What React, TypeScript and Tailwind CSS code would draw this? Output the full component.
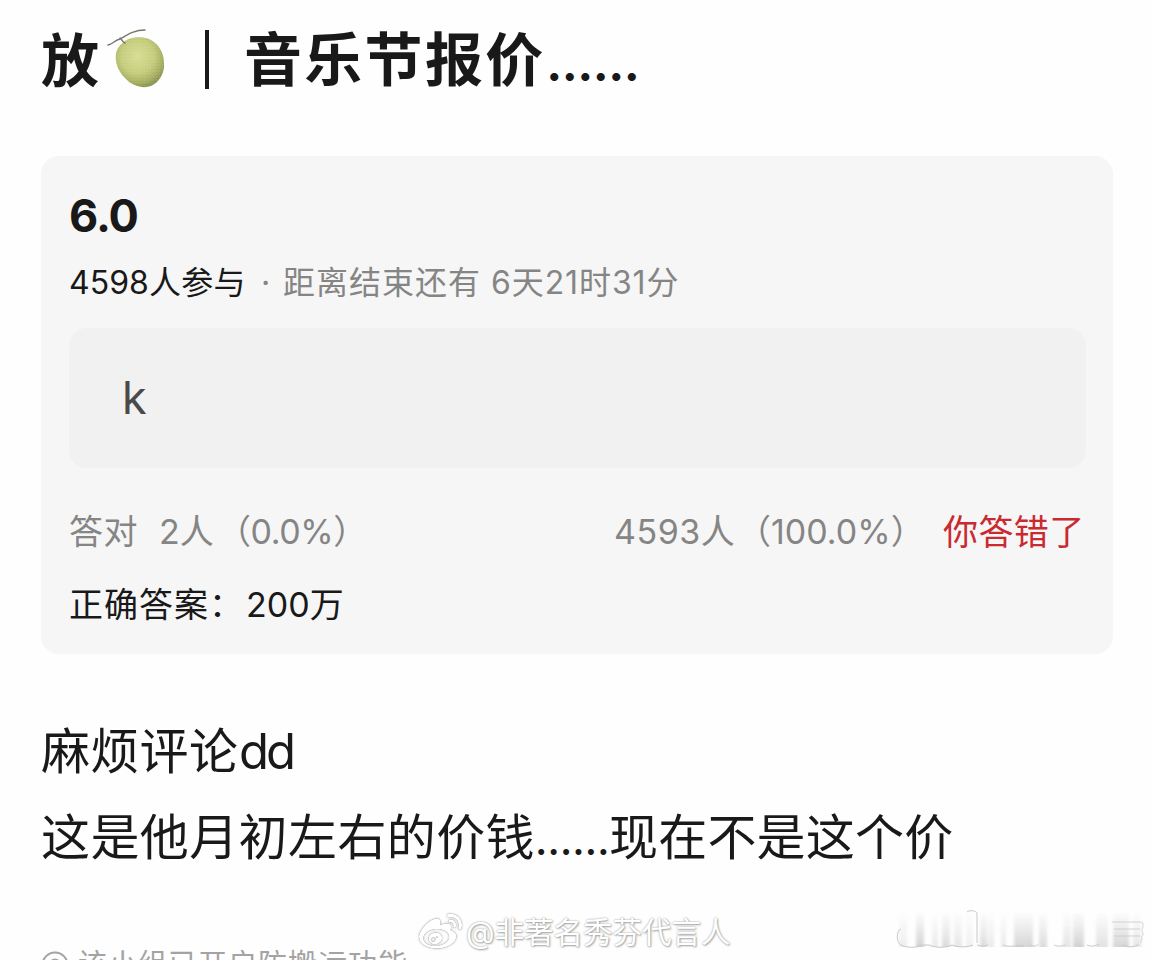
import { FaWeibo } from 'react-icons/fa';

function Melon() {
  return (
    <svg width="64" height="64" viewBox="0 0 64 64" className="shrink-0">
      <defs>
        <radialGradient id="melon" cx="0.45" cy="0.38" r="0.62">
          <stop offset="0" stopColor="#d6dc93" />
          <stop offset="0.55" stopColor="#c2ca78" />
          <stop offset="0.85" stopColor="#a0a95a" />
          <stop offset="1" stopColor="#858e4c" />
        </radialGradient>
        <pattern id="net" width="3" height="3" patternUnits="userSpaceOnUse">
          <path d="M0 1.5L1.5 0L3 1.5L1.5 3Z" fill="none" stroke="#eef0bd" strokeWidth="0.5" opacity="0.4" />
        </pattern>
      </defs>
      <path
        d="M17 13C22 8 34 7 42 10C51 14 57 23 57 34C58 45 51 54 44 57C36 60 25 57 18 49C10 41 8 32 9 25C10 19 13 16 17 13Z"
        fill="url(#melon)"
      />
      <path
        d="M17 13C22 8 34 7 42 10C51 14 57 23 57 34C58 45 51 54 44 57C36 60 25 57 18 49C10 41 8 32 9 25C10 19 13 16 17 13Z"
        fill="url(#net)"
      />
      <path d="M1 16C6 15 8 11 13 10C20 6 27 1 38 1M13 9C15 10 15 13 18 14" fill="none" stroke="#77766a" strokeWidth="1.4" strokeLinecap="round" />
    </svg>
  );
}

function QuizCard() {
  return (
    <section className="mt-[54px] h-[498px] w-[1072px] rounded-[18px] bg-[#f6f6f6] px-[28px] pt-[34px]">
      <h2 className="h-[52px] text-[45px] leading-[52px] font-bold tracking-[-1px]">6.0</h2>

      <div className="mt-[20px] flex h-[42px] text-[32px] leading-[42px]">
        <span className="w-[80px]">4598</span>
        <span className="w-[112px] tracking-[0.3px]">人参与</span>
        <span className="w-[22px] text-[#858585]">·</span>
        <span className="w-[208px] tracking-[1px] text-[#858585]">距离结束还有</span>
        <span className="tracking-[0.9px] text-[#858585]">6天21时31分</span>
      </div>

      <div className="mt-[24px] flex h-[140px] w-[1017px] items-center rounded-[18px] bg-[#f1f1f1] pl-[53px] text-[45px] text-[#4a4a4a]">
        k
      </div>

      <div className="mt-[38px] flex h-[52px] text-[34px] leading-[52px] text-[#858585]">
        <span className="w-[90px] tracking-[0.5px]">答对</span>
        <span className="w-[58px]">2人</span>
        <span className="w-[397px] tracking-[-0.4px]">（0.0%）</span>
        <span className="w-[123px] tracking-[0.5px]">4593人</span>
        <span className="w-[206px]">（100.0%）</span>
        <span className="text-[35px] tracking-[0.4px] text-[#c92a30]">你答错了</span>
      </div>

      <div className="mt-[21px] flex h-[52px] text-[34px] leading-[52px]">
        <span className="w-[177px] tracking-[1px]">正确答案：</span>
        <span>200万</span>
      </div>
    </section>
  );
}

function Watermark() {
  return (
    <div className="absolute top-[908px] left-[419px] flex h-[48px] items-center text-white">
      <FaWeibo size={43} className="[filter:drop-shadow(0_0_0.7px_#777)_drop-shadow(0_0_1px_#bbb)]" />
      <span className="ml-[4px] text-[29.5px] leading-[48px] [text-shadow:0_0_2px_#999,1px_1px_2px_#aaa]">@非著名秀芬代言人</span>
    </div>
  );
}

const bars = [
  { x: 10, w: 8, o: 0.3 },
  { x: 27, w: 8, o: 0.75 },
  { x: 43, w: 6, o: 0.35 },
  { x: 53, w: 8, o: 0.6 },
  { x: 65, w: 8, o: 0.4 },
  { x: 77, w: 7, o: 0.25 },
  { x: 91, w: 7, o: 0.6 },
  { x: 99, w: 6, o: 0.35 },
  { x: 112, w: 5, o: 0.35 },
  { x: 125, w: 19, o: 0.7 },
  { x: 150, w: 8, o: 0.6 },
  { x: 174, w: 8, o: 0.45 },
  { x: 184, w: 11, o: 0.75 },
  { x: 207, w: 12, o: 0.5 },
  { x: 224, w: 16, o: 0.7 },
  { x: 244, w: 8, o: 0.4 },
];

function Smudge() {
  return (
    <svg width="260" height="50" viewBox="0 0 260 50" className="absolute top-[905px] left-[890px]">
      <defs>
        <linearGradient id="fade" x1="0" y1="0" x2="0" y2="1">
          <stop offset="0" stopColor="#d0d0d0" stopOpacity="0.1" />
          <stop offset="1" stopColor="#c4c4c4" />
        </linearGradient>
        <filter id="soft">
          <feGaussianBlur stdDeviation="1.6 0.5" />
        </filter>
      </defs>
      <g filter="url(#soft)">
        {bars.map((b) => (
          <rect key={b.x} x={b.x - 1} y="8" width={b.w} height="34" fill="url(#fade)" opacity={b.o} />
        ))}
      </g>
      <g fill="none" stroke="#c8c8c8" strokeWidth="1">
        <path d="M11 24C6 26 6 37 11 40C16 43 27 43 33 40H39C45 43 56 43 62 40C69 43 78 42 83 40" />
        <path d="M77 7C79 5 87 5 87 9V38M87 40C94 42 97 41 98 39M113 40C117 42 120 41 134 41M140 40C144 42 147 41 148 39M164 40C168 42 172 41 175 40M197 40C202 42 206 41 209 39M232 40C239 43 245 42 249 39" />
        <path d="M222 17H250C255 17 252 21 253 23C250 25 254 28 253 30C250 31 254 35 250 38M224 24H250M224 31H250" opacity="0.8" />
      </g>
    </svg>
  );
}

export default function App() {
  return (
    <main className="relative h-[960px] w-[1153px] overflow-hidden bg-[#fefefe] pl-[41px] font-['Inter','Noto_Sans_CJK_SC',sans-serif] whitespace-nowrap text-[#191919]">
      <h1 className="flex h-[102px] items-center pt-[20px] text-[58px] leading-[80px] font-bold">
        <span className="w-[66px]">放</span>
        <Melon />
        <span className="mb-[4px] ml-[34px] h-[59px] w-[4px] bg-[#191919]" />
        <span className="ml-[35px] pt-[3px] tracking-[2.3px]">
          音乐节报价<span className="ml-[1px] text-[44px] font-extrabold tracking-normal">……</span>
        </span>
      </h1>

      <QuizCard />

      <div className="mt-[55px] flex h-[86px] text-[49px] leading-[86px]">
        <span className="w-[198px] tracking-[0.3px]">麻烦评论</span>
        <span className="tracking-[-3px]">dd</span>
      </div>
      <div className="flex h-[86px] text-[49px] leading-[86px]">
        <span className="w-[494px] tracking-[0.4px]">这是他月初左右的价钱</span>
        <span className="w-[74px] pt-[2px] text-[41px] font-medium">……</span>
        <span className="tracking-[0.2px]">现在不是这个价</span>
      </div>

      <div className="mt-[61px] flex h-[46px] items-center text-[29px] text-[#a3a3a3]">
        <svg width="28" height="28" viewBox="0 0 28 28" fill="none" stroke="currentColor" strokeWidth="2">
          <circle cx="14" cy="14" r="12.5" />
          <circle cx="14" cy="14" r="5.5" />
        </svg>
        <span className="ml-[9px] leading-[46px] tracking-[1px]">该小组已开启防搬运功能</span>
      </div>

      <Watermark />
      <Smudge />
    </main>
  );
}
